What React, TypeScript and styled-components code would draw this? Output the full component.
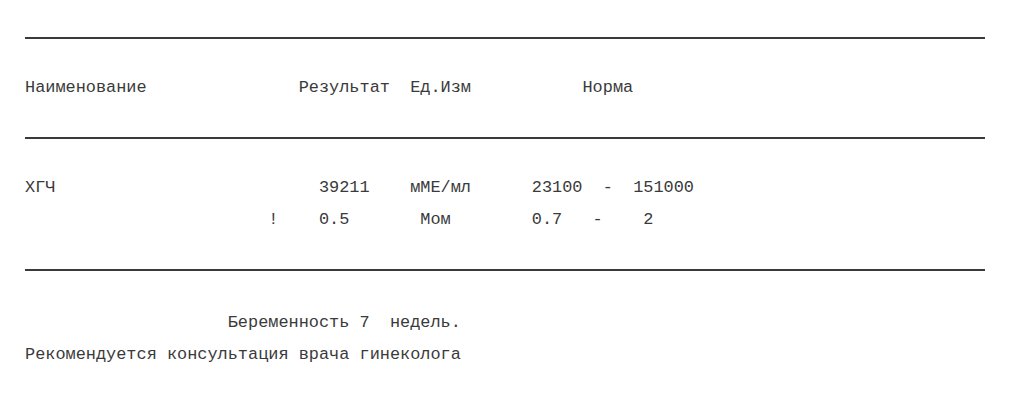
import React from 'react';
import styled, { createGlobalStyle } from 'styled-components';

const GlobalStyle = createGlobalStyle`
  html, body {
    margin: 0;
    padding: 0;
    background: #ffffff;
  }
`;

const Report = styled.div`
  width: 1021px;
  padding: 37px 36px 0 25px;
  box-sizing: border-box;
  font-family: "Liberation Mono", "Courier New", monospace;
  font-size: 16.9px;
  color: #3a3a3a;
`;

const Rule = styled.hr<{ $after: number }>`
  border: none;
  height: 2px;
  margin: 0 0 ${({ $after }) => $after}px 0;
  background: #3a3a3a;
`;

const Block = styled.div<{ $after: number }>`
  margin-bottom: ${({ $after }) => $after}px;
`;

const Line = styled.div`
  white-space: pre;
  line-height: 32px;
  height: 32px;
`;

const header = 'Наименование               Результат  Ед.Изм           Норма';

const results = [
  'ХГЧ                          39211    мМЕ/мл      23100  -  151000',
  '                        !    0.5       Мом        0.7   -    2',
];

const notes = [
  '                    Беременность 7  недель.',
  'Рекомендуется консультация врача гинеколога',
];

const App: React.FC = () => {
  return (
    <>
      <GlobalStyle />
      <Report>
        <Rule $after={33} />
        <Block $after={33}>
          <Line>{header}</Line>
        </Block>
        <Rule $after={33} />
        <Block $after={33}>
          {results.map((row, i) => (
            <Line key={i}>{row}</Line>
          ))}
        </Block>
        <Rule $after={36} />
        <Block $after={0}>
          {notes.map((row, i) => (
            <Line key={i}>{row}</Line>
          ))}
        </Block>
      </Report>
    </>
  );
};

export default App;
